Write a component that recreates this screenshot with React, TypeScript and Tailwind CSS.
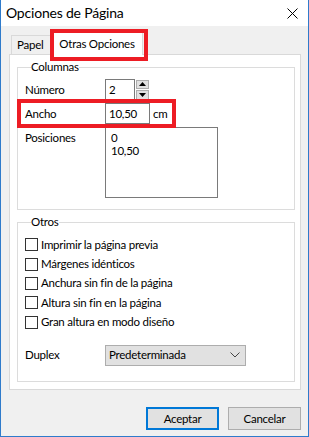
import React from "react";

const font = { fontFamily: 'Lato, "Noto Sans", sans-serif' };

const opciones = [
  "Imprimir la página previa",
  "Márgenes idénticos",
  "Anchura sin fin de la página",
  "Altura sin fin en la página",
  "Gran altura en modo diseño",
];

const Spinner = () => (
  <div className="flex flex-col w-[13px] h-[20px] ml-px gap-px">
    <div className="flex-1 flex items-center justify-center bg-[#e1e1e1] border border-[#adadad]">
      <svg width="7" height="4" viewBox="0 0 7 4"><polygon points="0,4 3.5,0 7,4" fill="#000" /></svg>
    </div>
    <div className="flex-1 flex items-center justify-center bg-[#e1e1e1] border border-[#adadad]">
      <svg width="7" height="4" viewBox="0 0 7 4"><polygon points="0,0 3.5,4 7,0" fill="#000" /></svg>
    </div>
  </div>
);

const App = () => {
  return (
    <div className="w-[309px] h-[437px] flex flex-col bg-[#f0f0f0] border-x border-b border-[#2f7bcb] text-black text-[11.5px] tracking-[-0.25px] leading-[16px]" style={font}>
      {/* barra de titulo */}
      <div className="h-[26px] bg-white flex items-center justify-between pl-[5px] pr-[10px] shrink-0">
        <span className="text-[14px] tracking-[-0.2px] leading-[20px]">Opciones de Página</span>
        <svg width="11" height="11" viewBox="0 0 11 11">
          <path d="M0.5 0.5 L10.5 10.5 M10.5 0.5 L0.5 10.5" stroke="#000" strokeWidth="1" />
        </svg>
      </div>

      <div className="flex-1 flex flex-col pl-[8px] pr-[7px] pt-[5px]">
        {/* pestañas */}
        <div className="flex items-end pl-[2px] h-[23px]">
          <div className="w-[40px] h-[19px] pl-[5px] flex items-center bg-[#f0f0f0] border-l border-t border-[#d9d9d9]">Papel</div>
          <div className="relative w-[92px] h-[24px] -mb-px z-10 flex items-center justify-center bg-white border-x border-t border-[#d9d9d9]">
            Otras Opciones
            <div className="absolute -left-[2px] -top-[3px] w-[98px] h-[32px] border-[4px] border-[#ed1c24]" />
          </div>
        </div>

        {/* panel */}
        <div className="h-[336px] bg-white border border-[#d9d9d9] pl-[7px] pr-[5px] pt-[4px] flex flex-col gap-[4px]">
          <fieldset className="border border-[#dcdcdc] px-[7px] pb-[10px] h-[151px]">
            <legend className="ml-[6px] px-0">Columnas</legend>
            <div className="flex flex-col pt-[4px]">
              <div className="flex items-center h-[21px]">
                <span className="w-[80px]">Número</span>
                <div className="w-[30px] h-[21px] border border-[#7a7a7a] bg-white pl-[3px] flex items-center">2</div>
                <Spinner />
              </div>
              <div className="relative flex items-center h-[21px] mt-[3px]">
                <span className="w-[80px]">Ancho</span>
                <div className="w-[45px] h-[21px] border border-[#7a7a7a] bg-white pl-[3px] flex items-center">10,50</div>
                <span className="ml-[3px]">cm</span>
                <div className="absolute -left-[8px] -top-[4px] w-[159px] h-[29px] border-[4px] border-[#ed1c24]" />
              </div>
              <div className="flex mt-[3px]">
                <span className="w-[80px] pt-[3px]">Posiciones</span>
                <div className="w-[113px] h-[71px] border border-[#7a7a7a] bg-white pl-[5px] pt-[3px] leading-[13px]">
                  <div>0</div>
                  <div>10,50</div>
                </div>
              </div>
            </div>
          </fieldset>

          <fieldset className="border border-[#dcdcdc] px-[7px] h-[168px]">
            <legend className="ml-[6px] px-0">Otros</legend>
            <div className="flex flex-col pt-[5px]">
              {opciones.map((o) => (
                <div key={o} className="flex items-center h-[19.4px] gap-[3px]">
                  <div className="w-[13px] h-[13px] border border-[#333] bg-white" />
                  <span>{o}</span>
                </div>
              ))}
            </div>
            <div className="flex items-center mt-[13px]">
              <span className="w-[80px]">Duplex</span>
              <div className="w-[141px] h-[21px] bg-[#e1e1e1] border border-[#adadad] flex items-center justify-between pl-[3px] pr-[5px]">
                <span>Predeterminada</span>
                <svg width="10" height="6" viewBox="0 0 10 6">
                  <polyline points="0.5,0.5 5,5 9.5,0.5" fill="none" stroke="#444" strokeWidth="1" />
                </svg>
              </div>
            </div>
          </fieldset>
        </div>

        {/* botones */}
        <div className="flex justify-end gap-[9px] mt-[17px]">
          <button className="w-[73px] h-[23px] bg-[#e1e1e1] border-2 border-[#0078d7]">Aceptar</button>
          <button className="w-[73px] h-[23px] bg-[#e1e1e1] border border-[#adadad]">Cancelar</button>
        </div>
      </div>
    </div>
  );
};

export default App;
